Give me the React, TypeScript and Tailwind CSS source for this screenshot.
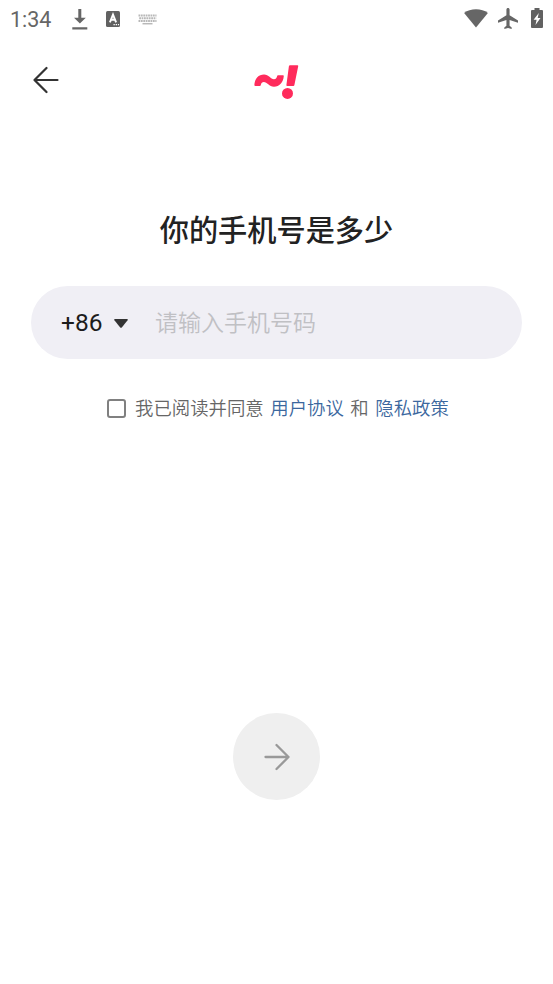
import { useState } from "react";

function DownloadIcon() {
  return (
    <svg width="16" height="21" viewBox="0 0 16 21" fill="#666">
      <path d="M6.3 0h3v8.800h4.500L7.900 14.600 2 8.800h4.300zM.3 18.300h15v2.200H.3z" />
    </svg>
  );
}

function LanguageIcon() {
  return (
    <svg width="14" height="16" viewBox="0 0 14 16">
      <rect width="14" height="16" rx="1.5" fill="#616161" />
      <path d="M3.900 11.300 7 3.600l3.100 7.700M5 8.800h4" fill="none" stroke="#fff" strokeWidth="1.900" />
      <path d="M7.500 13h1.300v1.300H7.500zM9.700 13H11v1.300H9.700zM11.900 13h1.200v1.300h-1.200z" fill="#fff" />
    </svg>
  );
}

function KeyboardIcon() {
  return (
    <svg width="19" height="11" viewBox="0 0 19 11" fill="none" stroke="#b8b8b8">
      <path d="M.5 1.500h18M.5 7h18" strokeWidth="2" strokeDasharray="1.800 .6" />
      <path d="M1.200 4.200h17" strokeWidth="2" strokeDasharray="1.800 .6" />
      <path d="M4.500 9.700h10" strokeWidth="1.500" />
    </svg>
  );
}

function WifiIcon() {
  return (
    <svg width="24" height="19" viewBox="0 0 24 19" className="-mt-[2px]" fill="#666">
      <path d="M12 18.500 .1 4C3.200 1.500 7.500.3 12 .3s8.800 1.200 11.900 3.700z" />
    </svg>
  );
}

function PlaneIcon() {
  return (
    <svg width="20" height="21" viewBox="2 2 19 20" preserveAspectRatio="none" className="-mt-px" fill="#666">
      <path d="M21 16v-2l-8-5V3.500c0-.83-.67-1.500-1.500-1.500S10 2.670 10 3.500V9l-8 5v2l8-2.500V19l-2 1.500V22l3.500-1 3.500 1v-1.500L13 19v-5.500l8 2.500z" />
    </svg>
  );
}

function BatteryIcon() {
  return (
    <svg width="12" height="20" viewBox="0 0 12 20" className="-mt-[2px]">
      <path d="M3.500 0h5v2H11q1 0 1 1v16q0 1-1 1H1q-1 0-1-1V3q0-1 1-1h2.500z" fill="#616161" />
      <path d="M7.800 5 2.600 11.800h3L4.500 17l5-7H6.700z" fill="#fff" />
    </svg>
  );
}

function Logo() {
  return (
    <svg width="45" height="35" viewBox="0 0 45 35">
      <path
        d="M.4 19.800C.8 13.200 4.600 9.500 10 9.500c4.800 0 6.600 4.700 10 4.700 1.800 0 2.500-1.200 3.100-3 .2-.7.500-1 1.200-1H29q.9 0 .8.900C29.200 17.800 25.400 21.700 20 21.700c-4.900 0-6.900-4.600-10.200-4.600-1.700 0-2.400 1-3 2.800-.2.700-.5 1-1.200 1H1.200q-.9 0-.8-1.100z"
        fill="#ff2b5c"
      />
      <path d="M34.900 1.200q.2-.9 1.100-.9h7.500q.9 0 .7.900l-3.800 18.900q-.2.900-1 .9h-6.300q-.8 0-.7-.9z" fill="#ff2b5c" />
      <circle cx="33.500" cy="28.400" r="5.500" fill="#ff2b5c" />
    </svg>
  );
}

function StatusBar() {
  return (
    <div className="flex h-[38px] items-center justify-between pl-[10px] pr-[10px]">
      <div className="flex items-center">
        <span className="w-[62px] pt-[2px] font-[Roboto] text-[21.500px] leading-[36px] text-[#666]">1:34</span>
        <DownloadIcon />
        <span className="ml-[18px]">
          <LanguageIcon />
        </span>
        <span className="ml-[18px]">
          <KeyboardIcon />
        </span>
      </div>
      <div className="flex items-center">
        <WifiIcon />
        <span className="ml-[10px]">
          <PlaneIcon />
        </span>
        <span className="ml-[13px]">
          <BatteryIcon />
        </span>
      </div>
    </div>
  );
}

export default function App() {
  const [agreed, setAgreed] = useState(false);

  return (
    <div className="flex h-[984px] w-[553px] flex-col overflow-hidden bg-white font-['Noto_Sans_CJK_SC',sans-serif]">
      <StatusBar />

      {/* Header: back button on the left, logo centred */}
      <header className="grid h-[85px] grid-cols-[1fr_auto_1fr] items-center px-[33px]">
        <button aria-label="Back" className="w-[26px] pb-[2px]">
          <svg width="26" height="28" viewBox="0 0 26 28" fill="none" stroke="#333" strokeWidth="2.200" strokeLinecap="round" strokeLinejoin="round">
            <path d="M13.500 2 1.500 14l12 12M1.500 14h23" />
          </svg>
        </button>
        <div className="pt-[3px]">
          <Logo />
        </div>
      </header>

      <main className="flex flex-1 flex-col items-center">
        <h1 className="mt-[83px] text-[29.200px] font-medium leading-[44px] text-[#222]">你的手机号是多少</h1>

        <div className="mt-[36px] flex h-[73px] w-[491px] items-center rounded-full bg-[#f0eff5] pl-[30px]">
          <button className="flex w-[94px] items-center text-[#1c1c1c]">
            <span className="w-[53px] pt-px text-left font-[Roboto] text-[24.500px] leading-[36px]">+86</span>
            <svg width="14" height="9" viewBox="0 0 14 9" className="mt-px" fill="#333">
              <path d="M1 0h12q1.300.3.600 1.300L8 8.300q-1 1-2 0L.4 1.300Q-.3.300 1 0z" />
            </svg>
          </button>
          <input
            type="tel"
            placeholder="请输入手机号码"
            className="mb-[2px] w-[300px] bg-transparent text-[23px] font-[350] outline-none placeholder:text-[#c0c0c4]"
          />
        </div>

        <div className="mt-[35px] flex h-[28px] w-[341px] items-center whitespace-nowrap text-[18.400px] font-[350] text-[#666]">
          <button
            role="checkbox"
            aria-checked={agreed}
            aria-label="同意"
            onClick={() => setAgreed(!agreed)}
            className={`ml-px mr-[9px] size-[19px] shrink-0 rounded-[3px] border-2 border-[#808080] ${agreed ? "bg-[#777]" : ""}`}
          />
          <span>我已阅读并同意</span>
          <a className="ml-[6.500px] text-[#3b679e]">用户协议</a>
          <span className="ml-[6.500px]">和</span>
          <a className="ml-[6.500px] text-[#3b679e]">隐私政策</a>
        </div>

        <button aria-label="Next" className="mt-[291px] flex size-[87px] items-center justify-center rounded-full bg-[#efefef]">
          <svg width="26" height="28" viewBox="0 0 26 28" fill="none" stroke="#999" strokeWidth="2.300" strokeLinecap="round" strokeLinejoin="round">
            <path d="M12.500 2l12 12-12 12M1.500 14h23" />
          </svg>
        </button>
      </main>
    </div>
  );
}
